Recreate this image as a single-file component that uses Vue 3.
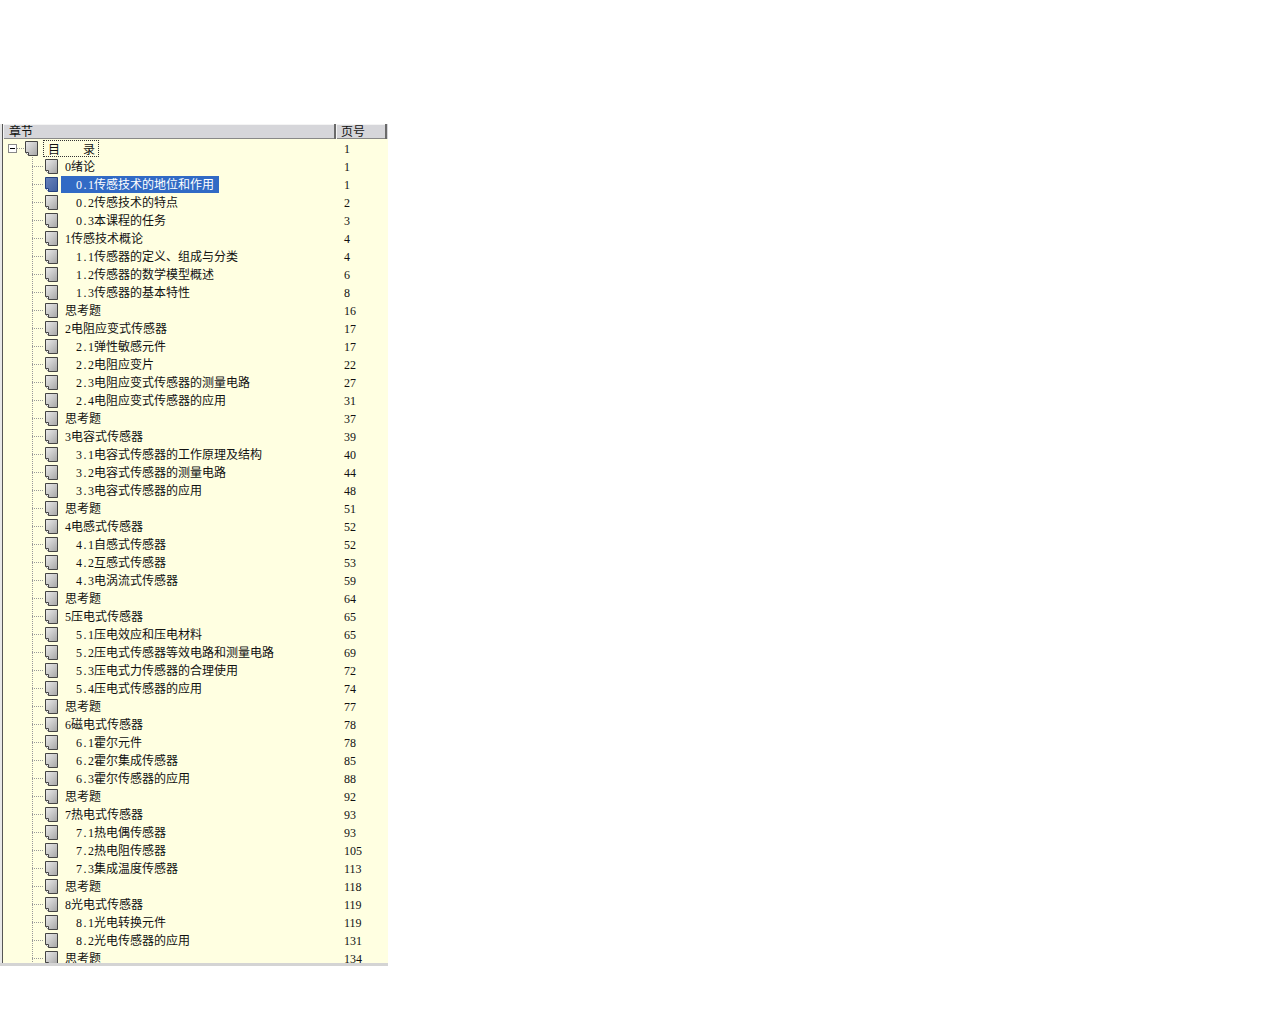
<script setup>
const rows = [
  ['0','绪论','1',0],['0.1','传感技术的地位和作用','1',1],['0.2','传感技术的特点','2',1],['0.3','本课程的任务','3',1],
  ['1','传感技术概论','4',0],['1.1','传感器的定义、组成与分类','4',1],['1.2','传感器的数学模型概述','6',1],['1.3','传感器的基本特性','8',1],['','思考题','16',0],
  ['2','电阻应变式传感器','17',0],['2.1','弹性敏感元件','17',1],['2.2','电阻应变片','22',1],['2.3','电阻应变式传感器的测量电路','27',1],['2.4','电阻应变式传感器的应用','31',1],['','思考题','37',0],
  ['3','电容式传感器','39',0],['3.1','电容式传感器的工作原理及结构','40',1],['3.2','电容式传感器的测量电路','44',1],['3.3','电容式传感器的应用','48',1],['','思考题','51',0],
  ['4','电感式传感器','52',0],['4.1','自感式传感器','52',1],['4.2','互感式传感器','53',1],['4.3','电涡流式传感器','59',1],['','思考题','64',0],
  ['5','压电式传感器','65',0],['5.1','压电效应和压电材料','65',1],['5.2','压电式传感器等效电路和测量电路','69',1],['5.3','压电式力传感器的合理使用','72',1],['5.4','压电式传感器的应用','74',1],['','思考题','77',0],
  ['6','磁电式传感器','78',0],['6.1','霍尔元件','78',1],['6.2','霍尔集成传感器','85',1],['6.3','霍尔传感器的应用','88',1],['','思考题','92',0],
  ['7','热电式传感器','93',0],['7.1','热电偶传感器','93',1],['7.2','热电阻传感器','105',1],['7.3','集成温度传感器','113',1],['','思考题','118',0],
  ['8','光电式传感器','119',0],['8.1','光电转换元件','119',1],['8.2','光电传感器的应用','131',1],['','思考题','134',0]
].map(([num, title, page, sub], i) => ({ major: num.split('.')[0], minor: num.split('.')[1], title, page, sub, selected: i === 1 }))
const pagePath = 'M0.5 0.5H12.5V14.5H3.5L0.5 11.5Z'
</script>

<template>
  <div class="page">
    <svg class="defs" width="0" height="0" aria-hidden="true">
      <defs>
        <linearGradient id="pg" x1="0" y1="0" x2="1" y2="1">
          <stop offset="0" stop-color="#ececec" />
          <stop offset="1" stop-color="#a4a4a4" />
        </linearGradient>
        <linearGradient id="pgs" x1="0" y1="0" x2="1" y2="1">
          <stop offset="0" stop-color="#6a84bc" />
          <stop offset="1" stop-color="#3f5f9f" />
        </linearGradient>
      </defs>
    </svg>
    <section class="panel">
      <div class="frame">
        <header class="head">
          <div class="hcell chapter">章节</div>
          <div class="hcell pageno">页号</div>
        </header>
        <div class="body">
          <div class="row root">
            <div class="tree">
              <span class="toggle"><i class="minus"></i></span>
              <span class="rootdash"></span>
              <svg class="icon" width="13" height="15" viewBox="0 0 13 15"><path :d="pagePath" fill="url(#pg)" stroke="#444" /><path d="M0.5 11.5H3.5V14.5" fill="#fff" stroke="#444" /></svg>
            </div>
            <div class="rootlabel"><span>目</span><span>录</span></div>
            <div class="num"><span class="asc">1</span></div>
          </div>
          <div v-for="r in rows" :key="r.major + r.title + r.page" class="row">
            <div class="tree">
              <span class="branch"></span>
              <svg class="icon" width="13" height="15" viewBox="0 0 13 15"><path :d="pagePath" :fill="r.selected ? 'url(#pgs)' : 'url(#pg)'" :stroke="r.selected ? '#24407f' : '#444'" /><path d="M0.5 11.5H3.5V14.5" fill="#fff" :stroke="r.selected ? '#24407f' : '#444'" /></svg>
            </div>
            <div class="label" :class="{ sel: r.selected, sub: r.sub }"><span class="asc">{{ r.major }}<template v-if="r.minor"><span class="dot">.</span>{{ r.minor }}</template></span>{{ r.title }}</div>
            <div class="num"><span class="asc">{{ r.page }}</span></div>
          </div>
        </div>
      </div>
    </section>
  </div>
</template>

<style scoped>
.page { width: 1280px; height: 1024px; background: #fff; padding-top: 124px; box-sizing: border-box; font: 12px "Noto Sans CJK SC", sans-serif; color: #111; overflow: hidden; }
.defs { display: block; position: absolute; }
.panel { width: 388px; height: 842px; box-sizing: border-box; padding-left: 2px; background: #e8e8e8; border-bottom: 3px solid #d4d4d4; overflow: hidden; }
.frame { height: 100%; border-left: 1px solid #555; display: flex; flex-direction: column; overflow: hidden; }
.head { height: 15px; flex: none; display: flex; background: #d6d6da; line-height: 13px; }
.hcell { box-sizing: border-box; height: 15px; border-right: 2px solid #6a6a6a; box-shadow: inset 1px 1px 0 #f4f4f4, inset 0 -1px 0 #888; }
.chapter { width: 333px; padding-left: 6px; }
.pageno { width: 51px; padding-left: 5px; }
.body { flex: 1; min-height: 0; overflow: hidden; background: #ffffe1; }
.row { height: 18px; display: flex; align-items: center; white-space: nowrap; line-height: 18px; }
.tree { width: 58px; height: 18px; flex: none; display: flex; align-items: center; box-sizing: border-box; padding-left: 29px; background: repeating-linear-gradient(180deg, #999 0 1px, transparent 1px 2px) 29px 0 / 1px 100% no-repeat; }
.root { height: 19px; margin-bottom: -1px; }
.root .tree { padding-left: 5px; width: 40px; background: repeating-linear-gradient(180deg, #999 0 1px, transparent 1px 2px) 29px 9px / 1px 9px no-repeat; }
.toggle { width: 9px; height: 9px; box-sizing: border-box; border: 1px solid #888; background: #fff; display: flex; align-items: center; justify-content: center; flex: none; }
.minus { width: 5px; height: 1px; background: #000; }
.rootdash { width: 7px; height: 1px; margin-right: 1px; background: repeating-linear-gradient(90deg, #999 0 1px, transparent 1px 2px); flex: none; }
.branch { width: 12px; height: 1px; margin-right: 1px; background: repeating-linear-gradient(90deg, #999 0 1px, transparent 1px 2px); flex: none; }
.icon { flex: none; margin-right: 3px; }
.rootlabel { width: 56px; height: 17px; box-sizing: border-box; padding: 0 3px 0 4px; border: 1px dotted #333; display: flex; justify-content: space-between; align-items: center; margin-right: 238px; line-height: 14px; flex: none; }
.label { flex: none; height: 17px; line-height: 16px; padding: 0 5px 0 4px; }
.label.sub { padding-left: 15px; }
.label.sel { background: #316ac5; color: #fff; }
.asc { font: 12px "Liberation Serif", serif; }
.dot { display: inline-block; width: 6px; text-align: center; }
.row .num { margin-left: auto; width: 44px; flex: none; line-height: 16px; height: 17px; }
</style>
